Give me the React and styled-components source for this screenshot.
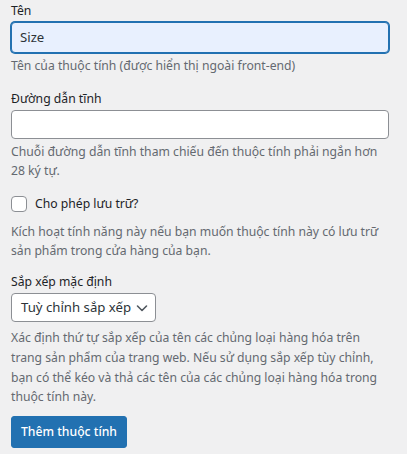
import React from 'react'
import styled, { createGlobalStyle } from 'styled-components'

const GlobalStyle = createGlobalStyle`
    html, body {
        margin: 0;
        padding: 0;
        background: #f0f0f1;
    }
    body {
        font-family: "Segoe UI", "Noto Sans", "Open Sans", sans-serif;
        font-size: 12.2px;
        line-height: 19.6px;
        color: #3c434a;
    }
`

const Form = styled.form`
    padding: 1px 18px 0 11px;
    display: flex;
    flex-direction: column;
`

const Field = styled.div`
    display: flex;
    flex-direction: column;
    margin-bottom: ${props => props.gap || '14px'};
`

const Label = styled.label`
    color: #1d2327;
    margin-bottom: 1px;
`

const TextInput = styled.input`
    box-sizing: border-box;
    width: 100%;
    height: ${props => props.h || '30px'};
    margin: 0;
    padding: 0 8px;
    font: inherit;
    font-size: 13.2px;
    color: #2c3338;
    border-radius: 4px;
    border: 1px solid ${props => props.focused ? '#2271b1' : '#8c8f94'};
    background: ${props => props.focused ? '#e8f0fe' : '#fff'};
    box-shadow: ${props => props.focused ? '0 0 0 1px #2271b1' : 'none'};
    outline: none;
`

const Desc = styled.p`
    margin: ${props => props.top || '3px'} 0 0;
    color: #646970;
`

const CheckRow = styled.label`
    display: flex;
    align-items: center;
    gap: 8px;
    color: #1d2327;
`

const Box = styled.span`
    box-sizing: border-box;
    width: 16px;
    height: 16px;
    border: 1px solid #8c8f94;
    border-radius: 4px;
    background: #fff;
`

const SelectBox = styled.div`
    box-sizing: border-box;
    width: 145px;
    height: 29px;
    display: flex;
    align-items: center;
    justify-content: space-between;
    padding: 0 6px 0 9px;
    margin-top: 1px;
    border: 1px solid #8c8f94;
    border-radius: 4px;
    background: #fff;
    color: #2c3338;
    font-size: 13.2px;
    white-space: nowrap;
`

const Button = styled.button`
    align-self: flex-start;
    height: 32px;
    padding: 0 9px;
    margin-top: 2px;
    border: 1px solid #2271b1;
    border-radius: 3px;
    background: #2271b1;
    color: #fff;
    font: inherit;
    font-weight: 500;
`

const Chevron = () => (
    <svg width="14" height="14" viewBox="0 0 14 14" fill="none">
        <path d="M2.5 5 L7 9.5 L11.5 5" stroke="#50575e" strokeWidth="1.6" strokeLinecap="round" strokeLinejoin="round" />
    </svg>
)

const App = () => (
    <>
        <GlobalStyle />
        <Form onSubmit={e => e.preventDefault()}>
            <Field>
                <Label>Tên</Label>
                <TextInput h="31px" focused defaultValue="Size" />
                <Desc>Tên của thuộc tính (được hiển thị ngoài front-end)</Desc>
            </Field>
            <Field gap="13px">
                <Label>Đường dẫn tĩnh</Label>
                <TextInput h="29px" />
                <Desc>Chuỗi đường dẫn tĩnh tham chiếu đến thuộc tính phải ngắn hơn 28 ký tự.</Desc>
            </Field>
            <Field gap="11px">
                <CheckRow><Box />Cho phép lưu trữ?</CheckRow>
                <Desc top="8px">Kích hoạt tính năng này nếu bạn muốn thuộc tính này có lưu trữ sản phẩm trong cửa hàng của bạn.</Desc>
            </Field>
            <Field gap="7px">
                <Label>Sắp xếp mặc định</Label>
                <SelectBox>Tuỳ chỉnh sắp xếp <Chevron /></SelectBox>
                <Desc top="6px">Xác định thứ tự sắp xếp của tên các chủng loại hàng hóa trên trang sản phẩm của trang web. Nếu sử dụng sắp xếp tùy chỉnh, bạn có thể kéo và thả các tên của các chủng loại hàng hóa trong thuộc tính này.</Desc>
            </Field>
            <Button type="submit">Thêm thuộc tính</Button>
        </Form>
    </>
)

export default App
